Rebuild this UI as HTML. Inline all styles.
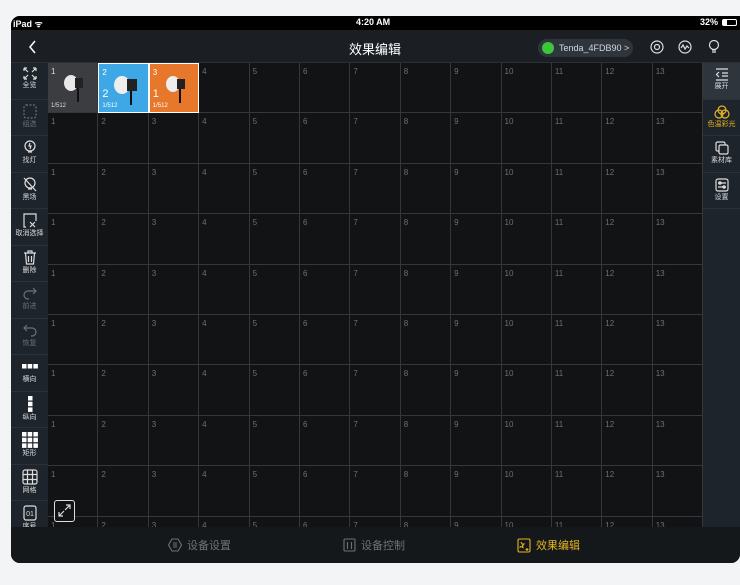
<!DOCTYPE html>
<html><head><meta charset="utf-8"><style>
*{margin:0;padding:0;box-sizing:border-box}
body{width:740px;height:585px;background:#f3f4f6;font-family:"Liberation Sans","Noto Sans CJK SC",sans-serif;position:relative;overflow:hidden}
#dev{position:absolute;left:11px;top:16px;width:729px;height:547px;border-radius:9px 0 9px 9px;overflow:hidden;background:#111315}
#status{position:absolute;left:0;top:0;width:729px;height:14px;background:#000;color:#fff;font-size:9px;font-weight:bold}
#nav{position:absolute;left:0;top:14px;width:729px;height:33px;background:#1b1f24;border-bottom:1px solid #2b3036}
#left{position:absolute;left:0;top:47px;width:37px;height:464px;background:#1e242b}
.li{height:36.5px;border-bottom:1px solid #2a3139;text-align:center;color:#d8dadc;font-size:7px;padding-top:4px;line-height:9px}
.li svg{display:block;margin:0 auto 1px}
.li.dim{color:#6b7076}
#grid{position:absolute;left:37px;top:47px;width:655px;height:464px;overflow:hidden}
.row{display:flex;height:50.4px}
.c{width:50.4px;flex:none;border-right:1px solid #34383c;border-bottom:1px solid #34383c;color:#6c7075;font-size:8px;padding:4px 0 0 3px;position:relative}
#right{position:absolute;left:692px;top:47px;width:37px;height:464px;background:#1e242b}
.ri{height:36.5px;border-bottom:1px solid #2a3139;text-align:center;color:#d8dadc;font-size:7px;padding-top:5px;line-height:9px}
.ri svg{display:block;margin:0 auto 1px}
#tab{position:absolute;left:0;top:511px;width:729px;height:36px;background:#15181b;font-size:11px;color:#6d7176}
.t{position:absolute;top:10px;display:flex;align-items:center;gap:5px}
</style></head><body>
<div id="dev">
<div id="status"><span style="position:absolute;left:2px;top:1px">iPad ᯤ</span><span style="position:absolute;left:345px;top:1px">4:20 AM</span><span style="position:absolute;left:689px;top:1px">32%</span><span style="position:absolute;left:711px;top:3px;width:15px;height:7px;border:1px solid #fff;border-radius:2px"><span style="display:block;width:4px;height:5px;background:#fff"></span></span></div>
<div id="nav">
<svg style="position:absolute;left:17px;top:10px" width="10" height="14"><path d="M7 1L2 7l5 6" stroke="#fff" stroke-width="1.5" fill="none"/></svg>
<div style="position:absolute;left:338px;top:9px;color:#fff;font-size:13px">效果编辑</div>
<div style="position:absolute;left:527px;top:9px;width:95px;height:18px;border-radius:9px;background:#2f353d;color:#d6d8da;font-size:9px;line-height:18px;padding-left:21px">Tenda_4FDB90 &gt;<span style="position:absolute;left:4px;top:3px;width:12px;height:12px;border-radius:6px;background:#3ec63b"></span></div>
<svg style="position:absolute;left:638px;top:9px" width="16" height="16" fill="none" stroke="#ddd" stroke-width="1.2"><circle cx="8" cy="8" r="6"/><circle cx="8" cy="8" r="2.5"/></svg>
<svg style="position:absolute;left:666px;top:9px" width="16" height="16" fill="none" stroke="#ddd" stroke-width="1.2"><circle cx="8" cy="8" r="6"/><path d="M4 9l2-3 2 4 2-3 2 2"/></svg>
<svg style="position:absolute;left:696px;top:9px" width="14" height="16" fill="none" stroke="#ddd" stroke-width="1.2"><circle cx="7" cy="6" r="4.5"/><path d="M5 11h4M5 13h4"/></svg>
</div>
<div id="left">
<div class="li"><svg width="14" height="13" stroke="#ddd" fill="none" stroke-width="1.2"><path d="M1 1l4 4M1 1h3M1 1v3M13 1l-4 4M13 1h-3M13 1v3M1 12l4-4M1 12h3M1 12v-3M13 12l-4-4M13 12h-3M13 12v-3"/></svg>全览</div>
<div class="li dim"><svg width="14" height="15" stroke="#6b7076" fill="none" stroke-width="1.2" stroke-dasharray="2 1.5"><rect x="1" y="1" width="12" height="13" rx="2"/></svg>组选</div>
<div class="li"><svg width="14" height="15" stroke="#ddd" fill="none" stroke-width="1.2"><circle cx="7" cy="6" r="5"/><path d="M5 12h4M7 3l-1 3h2l-1 3"/></svg>找灯</div>
<div class="li"><svg width="14" height="15" stroke="#ddd" fill="none" stroke-width="1.2"><circle cx="7" cy="6" r="5"/><path d="M5 12h4M1 1l12 13"/></svg>黑场</div>
<div class="li"><svg width="14" height="15" stroke="#ddd" fill="none" stroke-width="1.2"><path d="M3 14H1V1h12v7M7 9l5 5M12 9l-5 5"/></svg>取消选择</div>
<div class="li"><svg width="14" height="15" stroke="#ddd" fill="none" stroke-width="1.2"><path d="M1 3h12M5 3V1h4v2M2.5 3l1 11h7l1-11M5.5 6v6M8.5 6v6"/></svg>删除</div>
<div class="li dim"><svg width="14" height="15" stroke="#6b7076" fill="none" stroke-width="1.2"><path d="M10 2l3 3-3 3M13 5H5a4 4 0 0 0 0 8h1"/></svg>前进</div>
<div class="li dim"><svg width="14" height="15" stroke="#6b7076" fill="none" stroke-width="1.2"><path d="M4 2L1 5l3 3M1 5h8a4 4 0 0 1 0 8H8"/></svg>恢复</div>
<div class="li"><svg width="16" height="15" fill="#fff"><rect x="0" y="5" width="4.5" height="4.5"/><rect x="5.7" y="5" width="4.5" height="4.5"/><rect x="11.4" y="5" width="4.5" height="4.5"/></svg>横向</div>
<div class="li"><svg width="14" height="16" fill="#fff"><rect x="5" y="0" width="4.5" height="4.5"/><rect x="5" y="5.7" width="4.5" height="4.5"/><rect x="5" y="11.4" width="4.5" height="4.5"/></svg>纵向</div>
<div class="li"><svg width="16" height="16" fill="#fff"><rect x="0" y="0" width="4.5" height="4.5"/><rect x="5.7" y="0" width="4.5" height="4.5"/><rect x="11.4" y="0" width="4.5" height="4.5"/><rect x="0" y="5.7" width="4.5" height="4.5"/><rect x="5.7" y="5.7" width="4.5" height="4.5"/><rect x="11.4" y="5.7" width="4.5" height="4.5"/><rect x="0" y="11.4" width="4.5" height="4.5"/><rect x="5.7" y="11.4" width="4.5" height="4.5"/><rect x="11.4" y="11.4" width="4.5" height="4.5"/></svg>矩形</div>
<div class="li"><svg width="16" height="16" stroke="#ddd" fill="none" stroke-width="1.2"><rect x="1" y="1" width="14" height="14" rx="2"/><path d="M5.5 1v14M10.5 1v14M1 5.5h14M1 10.5h14"/></svg>网格</div>
<div class="li"><svg width="14" height="16" stroke="#ddd" fill="none" stroke-width="1.2"><rect x="1" y="1" width="12" height="14" rx="2"/><text x="7" y="11" font-size="7" fill="#ddd" stroke="none" text-anchor="middle">01</text></svg>序号</div>
</div>
<div id="grid">
<div class="row"><div class="c" style="background:#3b3d40;color:#ddd">1<svg style="position:absolute;left:12px;top:8px" width="28" height="34"><ellipse cx="11" cy="12" rx="7" ry="8" fill="#e8e8e8"/><rect x="15" y="7" width="8" height="10" fill="#222"/><path d="M18 17v14" stroke="#111" stroke-width="2"/></svg><span style="position:absolute;left:3px;bottom:3px;font-size:6px">1/512</span></div><div class="c" style="background:#3ea8e6;color:#fff;border:1px solid #fff">2<span style="position:absolute;left:3px;top:24px;font-size:11px">2</span><svg style="position:absolute;left:12px;top:8px" width="30" height="34"><ellipse cx="11" cy="13" rx="8" ry="9" fill="#eee"/><rect x="16" y="7" width="10" height="12" fill="#222"/><path d="M20 19v14" stroke="#111" stroke-width="2"/></svg><span style="position:absolute;left:3px;bottom:3px;font-size:6px">1/512</span></div><div class="c" style="background:#e7772b;color:#fff;border:1px solid #fff">3<span style="position:absolute;left:3px;top:24px;font-size:11px">1</span><svg style="position:absolute;left:12px;top:8px" width="28" height="34"><ellipse cx="11" cy="12" rx="7" ry="8" fill="#eee"/><rect x="15" y="7" width="8" height="10" fill="#222"/><path d="M18 17v14" stroke="#111" stroke-width="2"/></svg><span style="position:absolute;left:3px;bottom:3px;font-size:6px">1/512</span></div><div class="c">4</div><div class="c">5</div><div class="c">6</div><div class="c">7</div><div class="c">8</div><div class="c">9</div><div class="c">10</div><div class="c">11</div><div class="c">12</div><div class="c">13</div></div>
<div class="row"><div class="c">1</div><div class="c">2</div><div class="c">3</div><div class="c">4</div><div class="c">5</div><div class="c">6</div><div class="c">7</div><div class="c">8</div><div class="c">9</div><div class="c">10</div><div class="c">11</div><div class="c">12</div><div class="c">13</div></div>
<div class="row"><div class="c">1</div><div class="c">2</div><div class="c">3</div><div class="c">4</div><div class="c">5</div><div class="c">6</div><div class="c">7</div><div class="c">8</div><div class="c">9</div><div class="c">10</div><div class="c">11</div><div class="c">12</div><div class="c">13</div></div>
<div class="row"><div class="c">1</div><div class="c">2</div><div class="c">3</div><div class="c">4</div><div class="c">5</div><div class="c">6</div><div class="c">7</div><div class="c">8</div><div class="c">9</div><div class="c">10</div><div class="c">11</div><div class="c">12</div><div class="c">13</div></div>
<div class="row"><div class="c">1</div><div class="c">2</div><div class="c">3</div><div class="c">4</div><div class="c">5</div><div class="c">6</div><div class="c">7</div><div class="c">8</div><div class="c">9</div><div class="c">10</div><div class="c">11</div><div class="c">12</div><div class="c">13</div></div>
<div class="row"><div class="c">1</div><div class="c">2</div><div class="c">3</div><div class="c">4</div><div class="c">5</div><div class="c">6</div><div class="c">7</div><div class="c">8</div><div class="c">9</div><div class="c">10</div><div class="c">11</div><div class="c">12</div><div class="c">13</div></div>
<div class="row"><div class="c">1</div><div class="c">2</div><div class="c">3</div><div class="c">4</div><div class="c">5</div><div class="c">6</div><div class="c">7</div><div class="c">8</div><div class="c">9</div><div class="c">10</div><div class="c">11</div><div class="c">12</div><div class="c">13</div></div>
<div class="row"><div class="c">1</div><div class="c">2</div><div class="c">3</div><div class="c">4</div><div class="c">5</div><div class="c">6</div><div class="c">7</div><div class="c">8</div><div class="c">9</div><div class="c">10</div><div class="c">11</div><div class="c">12</div><div class="c">13</div></div>
<div class="row"><div class="c">1</div><div class="c">2</div><div class="c">3</div><div class="c">4</div><div class="c">5</div><div class="c">6</div><div class="c">7</div><div class="c">8</div><div class="c">9</div><div class="c">10</div><div class="c">11</div><div class="c">12</div><div class="c">13</div></div>
<div class="row"><div class="c">1</div><div class="c">2</div><div class="c">3</div><div class="c">4</div><div class="c">5</div><div class="c">6</div><div class="c">7</div><div class="c">8</div><div class="c">9</div><div class="c">10</div><div class="c">11</div><div class="c">12</div><div class="c">13</div></div>
<div style="position:absolute;left:6px;top:437px;width:21px;height:22px;border:1.3px solid #ddd;border-radius:3px;background:#111315"><svg width="19" height="19" stroke="#ddd" fill="none" stroke-width="1.2"><path d="M11 4h4v4M15 4l-5 5M8 15H4v-4M4 15l5-5"/></svg></div>
</div>
<div id="right">
<div class="ri" style="background:#2e353d"><svg width="14" height="13" stroke="#ddd" fill="none" stroke-width="1.2"><path d="M1 1h12M7 5h6M7 8h6M1 12h12M4 4L1.5 6.5 4 9"/></svg>展开</div>
<div class="ri" style="color:#e4b421"><svg width="16" height="14" stroke="#e4b421" fill="none" stroke-width="1.2"><circle cx="8" cy="5" r="4"/><circle cx="5" cy="9" r="4"/><circle cx="11" cy="9" r="4"/></svg>色温彩光</div>
<div class="ri"><svg width="14" height="14" stroke="#ddd" fill="none" stroke-width="1.2"><rect x="1" y="1" width="9" height="9" rx="1.5"/><rect x="4" y="4" width="9" height="9" rx="1.5" fill="#1e242b"/></svg>素材库</div>
<div class="ri"><svg width="14" height="14" stroke="#ddd" fill="none" stroke-width="1.2"><rect x="1" y="1" width="12" height="12" rx="2"/><path d="M3 5h8M3 9h8"/><circle cx="5" cy="5" r="1.2"/><circle cx="9" cy="9" r="1.2"/></svg>设置</div>
</div>
<div id="tab">
<div class="t" style="left:157px"><svg width="14" height="14" stroke="#6d7176" fill="none" stroke-width="1.1"><path d="M4 1h6l3.5 6-3.5 6H4L.5 7z"/><path d="M5 5h4M5 7h4M5 9h4"/></svg>设备设置</div>
<div class="t" style="left:332px"><svg width="13" height="14" stroke="#6d7176" fill="none" stroke-width="1.1"><rect x="1" y="1" width="11" height="12" rx="1"/><path d="M4.5 4v7M8.5 4v7"/></svg>设备控制</div>
<div class="t" style="left:506px;color:#e4b421"><svg width="14" height="15" stroke="#e4b421" fill="none" stroke-width="1.1"><rect x="1" y="1" width="12" height="13" rx="1.5"/><path d="M4 4l1 2h2l-1.5 1.5.5 2L4 8.5 2.5 9.5"/><path d="M10 10v3M8.5 11.5h3"/></svg>效果编辑</div>
</div>
</div>
</body></html>
